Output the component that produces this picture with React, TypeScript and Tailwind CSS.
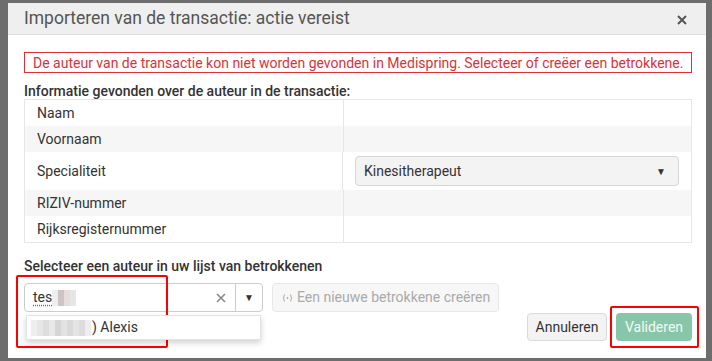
import React from 'react';

const rows = [
  { label: 'Naam', tall: false, shaded: false },
  { label: 'Voornaam', tall: false, shaded: true },
  { label: 'Specialiteit', tall: true, shaded: false },
  { label: 'RIZIV-nummer', tall: false, shaded: true },
  { label: 'Rijksregisternummer', tall: false, shaded: false },
];

const Blur: React.FC<{ cells: string[] }> = ({ cells }) => (
  <span className="inline-flex items-center h-[16px]">
    {cells.map((c, i) => (
      <span key={i} className={`inline-block w-[6px] h-[16px] ${c}`} />
    ))}
  </span>
);

const App: React.FC = () => {
  return (
    <div className="w-[712px] h-[361px] bg-[#6d6d6d] pt-[3px] pl-[8px] font-['Roboto',sans-serif] overflow-hidden">
      <div className="relative w-[698px] h-[355px] bg-white flex flex-col">
        {/* Header */}
        <div className="h-[32px] bg-[#eeefee] border-b border-[#dcdddc] flex items-center justify-between pl-[16px] pr-[19px]">
          <h2 className="text-[17.5px] text-[#555] leading-none">Importeren van de transactie: actie vereist</h2>
          <svg className="w-[10px] h-[10px] mt-[2px]" viewBox="0 0 10 10" stroke="#555" strokeWidth={2}>
            <path d="M1 1 L9 9 M9 1 L1 9" />
          </svg>
        </div>

        <div className="pl-[16px] pr-[14px] pt-[17px] flex flex-col">
          {/* Error */}
          <div className="h-[21px] border border-[#dc2f38] flex items-center pl-[8px] text-[14px] text-[#d9323b] leading-none">
            De auteur van de transactie kon niet worden gevonden in Medispring. Selecteer of creëer een betrokkene.
          </div>

          <h3 className="mt-[10px] text-[14px] font-medium text-[#333] leading-[16px]">
            Informatie gevonden over de auteur in de transactie:
          </h3>

          {/* Info table */}
          <div className="border border-[#e6e6e6] flex flex-col">
            {rows.map((r) => (
              <div
                key={r.label}
                className={`flex ${r.tall ? 'h-[38px]' : 'h-[26px]'} ${r.shaded ? 'bg-[#f5f6f5]' : 'bg-white'}`}
              >
                <div className="w-[319px] border-r border-[#e6e6e6] pl-[12px] flex items-center text-[14px] text-[#333]">
                  {r.label}
                </div>
                <div className="flex-1 flex items-center pl-[12px] pr-[12px]">
                  {r.tall && (
                    <div className="w-[324px] h-[30px] bg-[#f3f3f3] border border-[#d6d6d6] rounded-[4px] flex items-center justify-between pl-[8px] pr-[12px] text-[14px] text-[#333]">
                      <span>Kinesitherapeut</span>
                      <span className="text-[10px] text-[#333]">▼</span>
                    </div>
                  )}
                </div>
              </div>
            ))}
          </div>

          <h3 className="mt-[15px] text-[14px] font-medium text-[#333] leading-[16px]">
            Selecteer een auteur in uw lijst van betrokkenen
          </h3>

          {/* Author picker */}
          <div className="mt-[9px] flex gap-[9px] relative">
            <div className="w-[239px] h-[29px] border border-[#ccc] rounded-[4px] flex items-center bg-white">
              <div className="flex-1 flex items-center pl-[8px] text-[14px] text-[#333]">
                <span className="underline decoration-dotted decoration-[#e03b3b] underline-offset-[3px]">tes</span>
                <Blur cells={['bg-[#eee]', 'bg-[#cfc4c4]', 'bg-[#e9dcdc]', 'bg-[#e6e6e6]']} />
              </div>
              <svg className="w-[10px] h-[10px] mr-[9px]" viewBox="0 0 10 10" stroke="#888" strokeWidth={1.6}>
                <path d="M1 1 L9 9 M9 1 L1 9" />
              </svg>
              <div className="w-[27px] h-full border-l border-[#ccc] flex items-center justify-center text-[10px] text-[#333]">▼</div>
            </div>
            <div className="w-[227px] h-[29px] border border-[#e7e7e7] bg-[#f7f7f7] rounded-[4px] flex items-center pl-[8px] text-[14px] text-[#aaa]">
              <svg className="w-[13px] h-[10px] mr-[3px]" viewBox="0 0 13 10" fill="none" stroke="#aaa" strokeWidth={1}>
                <path d="M3.5 1.5 Q1.5 5 3.5 8.5" />
                <path d="M9.5 1.5 Q11.5 5 9.5 8.5" />
                <circle cx="6.5" cy="5" r="0.9" fill="#aaa" stroke="none" />
              </svg>
              Een nieuwe betrokkene creëren
            </div>

            {/* Dropdown */}
            <div className="absolute left-[2px] top-[32px] w-[235px] h-[25px] bg-white border border-[#e3e3e3] shadow-[0_3px_6px_rgba(0,0,0,0.18)] flex items-center pl-[4px] text-[14px] text-[#333] z-10">
              <Blur cells={['bg-[#eee]', 'bg-[#e6e6e6]', 'bg-[#ddd]', 'bg-[#e8e8e8]', 'bg-[#d6d6d6]', 'bg-[#e2e2e2]', 'bg-[#d9d9d9]', 'bg-[#e4e4e4]', 'bg-[#dcdcdc]', 'bg-[#eee]']} />
              <span className="ml-[1px]">) Alexis</span>
            </div>
          </div>

          {/* Footer buttons */}
          <div className="mt-[1px] flex justify-end gap-[9px]">
            <button className="w-[80px] h-[28px] bg-[#f3f3f3] border border-[#dadada] rounded-[4px] text-[14px] text-[#333]">
              Annuleren
            </button>
            <button className="w-[76px] h-[28px] bg-[#87c6a9] rounded-[4px] text-[14px] text-white/90">
              Valideren
            </button>
          </div>
        </div>

        {/* Annotation boxes */}
        <div className="absolute left-[8px] top-[272px] w-[152px] h-[73px] border-2 border-[#f00] rounded-[2px] pointer-events-none" />
        <div className="absolute left-[602px] top-[303px] w-[89px] h-[42px] border-2 border-[#f00] rounded-[2px] pointer-events-none" />
      </div>
    </div>
  );
};

export default App;
